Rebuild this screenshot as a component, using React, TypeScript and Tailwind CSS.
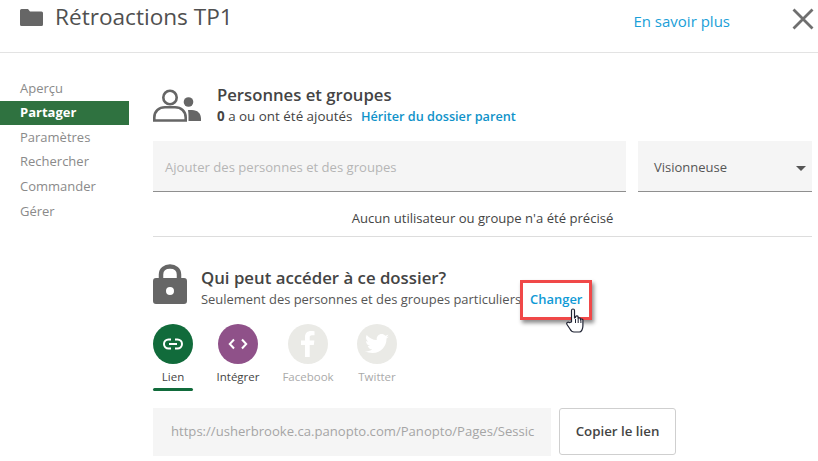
import React from "react";

const font = { fontFamily: '"Open Sans", "Noto Sans", sans-serif' };

function Folder() {
  return (
    <svg width="23" height="17" viewBox="0 0 23 17" fill="#666">
      <path d="M1.500 0H8l2 2.500h11.500A1.500 1.500 0 0 1 23 4v11.500a1.500 1.500 0 0 1-1.500 1.500h-20A1.500 1.500 0 0 1 0 15.500v-14A1.500 1.500 0 0 1 1.500 0z" />
    </svg>
  );
}

function People() {
  return (
    <svg width="48" height="33" viewBox="0 0 48 33" className="shrink-0">
      <circle cx="17" cy="8.500" r="6.700" fill="none" stroke="#666" strokeWidth="2.600" />
      <path d="M1.300 31.500v-3C1.300 22 6 18.300 12 18.300h10c6 0 10.700 3.700 10.700 10.200v3z" fill="none" stroke="#666" strokeWidth="2.600" />
      <circle cx="35.500" cy="13" r="4.800" fill="#666" />
      <path d="M35 21h4c5.500 0 9 3.500 9 8.500V32H35.500v-5c0-2.200-.2-4-.5-6z" fill="#666" />
    </svg>
  );
}

function Lock() {
  return (
    <svg width="34" height="40" viewBox="0 0 34 40" className="shrink-0">
      <path d="M8 17V10.500C8 5.500 12 2.500 17 2.500s9 3 9 8V17" fill="none" stroke="#666" strokeWidth="4.500" />
      <path fill="#666" fillRule="evenodd" d="M3 14h28a3 3 0 0 1 3 3v20a3 3 0 0 1-3 3H3a3 3 0 0 1-3-3V17a3 3 0 0 1 3-3zm14 9a4 4 0 1 0 0 8 4 4 0 0 0 0-8z" />
    </svg>
  );
}

function Hand() {
  return (
    <svg width="18" height="25" viewBox="0 0 18 25" className="absolute left-[36px] top-[19px]">
      <path d="M5.500 14V2.500a1.500 1.500 0 0 1 3 0V10l1-.5v-.5a1.300 1.300 0 0 1 2.600.5v1a1.300 1.300 0 0 1 2.400.5v1a1.200 1.200 0 0 1 2.400.5V18c0 3-1.500 6-3.500 6H8c-2 0-3-1-4-3l-3-4.500c-1-1.500 1-3 2.200-1.800z" fill="#fff" stroke="#1f2333" strokeWidth="1.200" strokeLinejoin="round" />
      <path d="M9.500 11v4M12.200 11v4M14.900 12v3" stroke="#1f2333" strokeWidth="1" />
    </svg>
  );
}

function Share({ label, bg, children, active, muted }: { label: string; bg: string; children: React.ReactNode; active?: boolean; muted?: boolean }) {
  return (
    <div className="flex w-10 flex-col items-center">
      <div className="flex h-10 w-10 items-center justify-center rounded-full" style={{ background: bg }}>{children}</div>
      <div className={`mt-[6px] h-[14px] text-[11.500px] leading-[14px] whitespace-nowrap ${muted ? "text-[#aaaaaa]" : "text-[#444444]"}`}>{label}</div>
      {active && <div className="mt-[4px] h-[3px] w-10 rounded-sm bg-[#116b3b]" />}
    </div>
  );
}

export default function App() {
  const nav = ["Aperçu", "Partager", "Paramètres", "Rechercher", "Commander", "Gérer"];
  return (
    <div className="h-[461px] w-[818px] overflow-hidden bg-white" style={font}>
      <header className="flex h-[53px] border-b border-[#e3e3e3]">
        <div className="ml-5 mt-[9px]"><Folder /></div>
        <div className="ml-[12px] text-[22.600px] leading-[34px] text-[#505050]">Rétroactions TP1</div>
        <div className="ml-auto mt-[12px] text-[15px] leading-[18px] text-[#1aa0d8]">En savoir plus</div>
        <svg width="22" height="22" viewBox="0 0 22 22" className="ml-[62px] mr-[4px] mt-[8px]">
          <path d="M1.500 1.500l19 19M20.500 1.500l-19 19" stroke="#6f6f6f" strokeWidth="2.800" />
        </svg>
      </header>
      <div className="flex">
        <nav className="w-[129px] shrink-0 pt-[23px]">
          {nav.map((n) => (
            <div key={n} className={`flex h-[24.600px] items-center pl-5 text-[13px] ${n === "Partager" ? "bg-[#2f7240] text-[13.500px] font-bold text-white" : "text-[#8a8a8a]"}`}>{n}</div>
          ))}
        </nav>
        <main className="ml-6 w-[659px] shrink-0">
          <section className="flex h-[69px] pt-[36px]">
            <People />
            <div className="ml-4 -mt-[4px]">
              <div className="text-[16.700px] leading-[20px] font-semibold text-[#444444]">Personnes et groupes</div>
              <div className="mt-[1px] text-[13.400px] leading-[20px] text-[#444444]"><b>0</b> a ou ont été ajoutés <span className="ml-[5px] text-[12.700px] font-semibold text-[#0f92c9]">Hériter du dossier parent</span></div>
            </div>
          </section>
          <section className="mt-[19px] flex gap-3">
            <div className="flex h-[51px] w-[473px] items-center border-b border-[#8f8f8f] bg-[#f5f5f5] pt-[4px] pl-3 text-[13.100px] text-[#b5b5b5]">Ajouter des personnes et des groupes</div>
            <div className="flex h-[51px] w-[174px] items-center justify-between border-b border-[#8f8f8f] bg-[#f5f5f5] pt-[4px] pl-4 pr-[6px] text-[13px] text-[#555555]">
              Visionneuse
              <span className="h-0 w-0 border-x-[5px] border-t-[5px] border-x-transparent border-t-[#555555]" />
            </div>
          </section>
          <div className="mt-[17px] h-[28px] w-full border-b border-[#dddddd] text-center text-[13.100px] leading-[18px] text-[#444444]">Aucun utilisateur ou groupe n'a été précisé</div>
          <section className="mt-[27px] flex h-10">
            <Lock />
            <div className="ml-[14px] mt-[4px]">
              <div className="text-[16.800px] leading-[20px] font-semibold text-[#444444]">Qui peut accéder à ce dossier?</div>
              <div className="mt-[1px] flex text-[12.950px] leading-[20px] text-[#555555]">
                Seulement des personnes et des groupes particuliers
                <div className="relative ml-[9px] font-semibold text-[#109ad6]">
                  Changer
                  <div className="pointer-events-none absolute -left-[10px] -top-[9px] h-[40px] w-[72px] border-[3px] border-[#f04848] shadow-[2px_3px_4px_rgba(0,0,0,0.45)]" />
                  <Hand />
                </div>
              </div>
            </div>
          </section>
          <section className="mt-[20px] flex h-[67px]">
            <Share label="Lien" bg="#116b3b" active>
              <svg width="20" height="12" viewBox="0 0 20 12" fill="none" stroke="#fff" strokeWidth="2">
                <path d="M8 1.500H5.500a4.500 4.500 0 0 0 0 9H8M12 1.500h2.500a4.500 4.500 0 0 1 0 9H12M6 6h8" />
              </svg>
            </Share>
            <div className="ml-[25px]">
              <Share label="Intégrer" bg="#8f5189">
                <svg width="20" height="12" viewBox="0 0 20 12" fill="none" stroke="#fff" strokeWidth="2">
                  <path d="M6 1.500L1.800 6 6 10.500M14 1.500L18.200 6 14 10.500" />
                </svg>
              </Share>
            </div>
            <div className="ml-[30px]">
              <Share label="Facebook" bg="#eaeae6" muted>
                <svg width="14" height="26" viewBox="0 0 14 26" fill="#fff">
                  <path d="M4 26V14H0V9.500h4V6c0-4 2.500-6 6-6 1.700 0 3 .1 3.500.2v4.100H11c-1.900 0-2.300.9-2.300 2.300v2.900h4.700L12.800 14H8.700v12z" />
                </svg>
              </Share>
            </div>
            <div className="ml-[29px]">
              <Share label="Twitter" bg="#eaeae6" muted>
                <svg width="24" height="20" viewBox="0 0 24 20" fill="#fff">
                  <path d="M24 2.400c-.9.400-1.800.7-2.800.8 1-.6 1.800-1.600 2.200-2.700-1 .6-2 1-3.100 1.200C19.300.7 18 0 16.600 0c-2.700 0-4.900 2.200-4.900 4.900 0 .4 0 .8.100 1.100C7.700 5.800 4.100 3.900 1.700.9c-.4.700-.7 1.600-.7 2.500 0 1.700.9 3.200 2.200 4.100-.8 0-1.600-.2-2.200-.6v.1c0 2.400 1.700 4.400 3.900 4.800-.4.100-.8.200-1.300.2-.3 0-.6 0-.9-.1.600 2 2.400 3.400 4.600 3.400-1.700 1.300-3.800 2.100-6.100 2.100-.4 0-.8 0-1.200-.1C2.200 18.300 4.800 19 7.500 19c9.100 0 14-7.500 14-14v-.6c1-.7 1.800-1.500 2.500-2z" />
                </svg>
              </Share>
            </div>
          </section>
          <section className="mt-[17px] flex">
            <div className="flex h-12 w-[398px] items-center whitespace-nowrap bg-[#f5f5f5] px-[18px] text-[13.100px] text-[#a5a5a5]">https://usherbrooke.ca.panopto.com/Panopto/Pages/Sessic</div>
            <div className="ml-2 flex h-[47px] w-[117px] items-center justify-center rounded-[3px] border border-[#cfcfcf] pt-[1px] text-[13.300px] font-semibold text-[#444444]">Copier le lien</div>
          </section>
        </main>
      </div>
    </div>
  );
}
